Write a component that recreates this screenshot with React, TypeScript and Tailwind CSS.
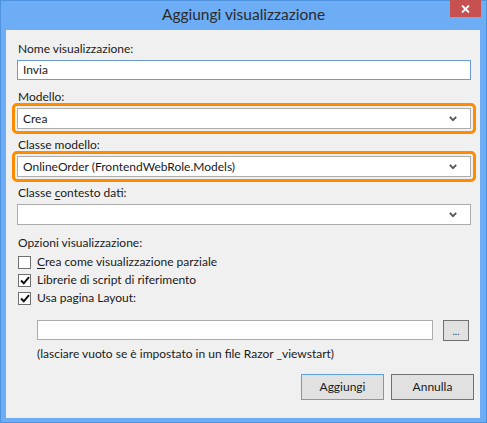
import React from "react";

const font = { fontFamily: "Lato, 'Noto Sans', sans-serif" };

function Chevron() {
  return (
    <svg width="8" height="6" viewBox="0 0 8 6" className="shrink-0">
      <path d="M0.8 0.8 L4 4.2 L7.2 0.8" fill="none" stroke="#555555" strokeWidth="1.8" />
    </svg>
  );
}

function Combo({ value }: { value?: string }) {
  return (
    <div className="flex h-[21px] items-center justify-between border border-[#acacac] bg-white pl-[5px] pr-[13px]">
      <span className="text-[12px] leading-none text-[#1a1a1a]">{value}</span>
      <Chevron />
    </div>
  );
}

function Highlight({ children }: { children: React.ReactNode }) {
  return (
    <div className="-m-[5px] rounded-[5px] border-[3px] border-[#ff8c00] p-[2px]">{children}</div>
  );
}

function Label({ children, className = "" }: { children: React.ReactNode; className?: string }) {
  return <div className={`h-[16px] pl-[1px] text-[12px] leading-[16px] text-[#1a1a1a] ${className}`}>{children}</div>;
}

function Check({ checked, children }: { checked: boolean; children: React.ReactNode }) {
  return (
    <div className="flex h-[18px] items-center gap-[6px] pl-[1px]">
      <div className="flex h-[13px] w-[13px] items-center justify-center border border-[#707070] bg-white">
        {checked && (
          <svg width="10" height="9" viewBox="0 0 10 9">
            <path d="M1 4.5 L3.8 7.3 L9 1.2" fill="none" stroke="#111111" strokeWidth="2" />
          </svg>
        )}
      </div>
      <span className="text-[12px] leading-none text-[#1a1a1a]">{children}</span>
    </div>
  );
}

export default function App() {
  return (
    <div style={font} className="flex h-[423px] w-[487px] flex-col border border-[#4f92de] bg-[#6cadf5]">
      {/* title bar */}
      <div className="relative flex h-[29px] items-center justify-center">
        <span className="-mt-[2px] text-[15.5px] text-[#2b2b2b]">Aggiungi visualizzazione</span>
        <div className="absolute right-[5px] top-[-1px] flex h-[17px] w-[31px] items-center justify-center bg-[#c75050]">
          <svg width="9" height="8" viewBox="0 0 9 8">
            <path d="M1 0.5 L8 7.5 M8 0.5 L1 7.5" stroke="#ffffff" strokeWidth="1.8" />
          </svg>
        </div>
      </div>

      {/* content */}
      <div className="ml-[5px] mr-[6px] flex h-[388px] flex-col bg-[#f0f0f0] pl-[11px] pr-[9px] pt-[11px]">
        <Label>Nome visualizzazione:</Label>
        <div className="mt-[3px] flex h-[20px] items-center border border-[#6a9bd8] bg-white pl-[5px] text-[12px] text-[#1a1a1a]">
          Invia
        </div>

        <Label className="mt-[9px]">Modello:</Label>
        <div className="mt-[3px]">
          <Highlight>
            <Combo value="Crea" />
          </Highlight>
        </div>

        <Label className="mt-[8px]">Classe modello:</Label>
        <div className="mt-[3px]">
          <Highlight>
            <Combo value="OnlineOrder (FrontendWebRole.Models)" />
          </Highlight>
        </div>

        <Label className="mt-[8px]">
          Classe <span className="underline underline-offset-2">c</span>ontesto dati:
        </Label>
        <div className="mt-[3px]">
          <Combo />
        </div>

        <Label className="mt-[10px]">Opzioni visualizzazione:</Label>
        <div className="mt-[2px] flex flex-col">
          <Check checked={false}>
            <span className="underline underline-offset-2">C</span>rea come visualizzazione parziale
          </Check>
          <Check checked>Librerie di script di riferimento</Check>
          <Check checked>Usa pagina Layout:</Check>
        </div>

        <div className="ml-[20px] mr-[2px] mt-[13px] flex items-start gap-[10px]">
          <div className="h-[20px] flex-1 border border-[#acacac] bg-white" />
          <div className="flex h-[21px] w-[26px] items-center justify-center border border-[#707070] bg-[#e1e1e1] text-[10px] leading-none text-[#333]">
            ...
          </div>
        </div>
        <div className="ml-[20px] mt-[5px] h-[16px] text-[12px] leading-[16px] text-[#1a1a1a]">
          (lasciare vuoto se è impostato in un file Razor _viewstart)
        </div>

        <div className="-mr-[3px] mt-[12px] flex justify-end gap-[7px]">
          <div className="flex h-[26px] w-[83px] items-center justify-center border border-[#5d9fe0] bg-[#e1e1e1] text-[12px] text-[#1a1a1a]">
            Aggiungi
          </div>
          <div className="flex h-[26px] w-[83px] items-center justify-center border border-[#707070] bg-[#e1e1e1] text-[12px] text-[#1a1a1a]">
            Annulla
          </div>
        </div>
      </div>
    </div>
  );
}
